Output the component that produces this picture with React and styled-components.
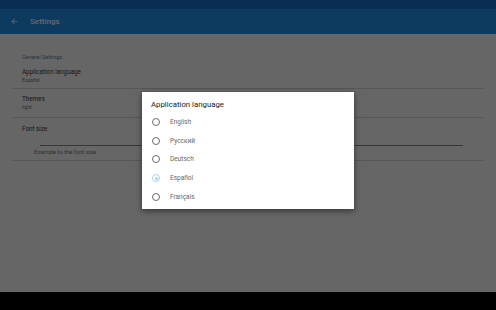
import React, { useState } from 'react'
import styled, { createGlobalStyle } from 'styled-components'

const GlobalStyle = createGlobalStyle`
  html, body {
    margin: 0;
    padding: 0;
    background: #000;
  }
  body {
    font-family: Roboto, "Noto Sans", sans-serif;
  }
`

const languages = ['English', 'Русский', 'Deutsch', 'Español', 'Français']

const Screen = styled.div`
  position: relative;
  width: 496px;
  height: 310px;
  display: flex;
  flex-direction: column;
  overflow: hidden;
`

const StatusBar = styled.div`
  height: 9px;
  background: #1a74cf;
`

const Toolbar = styled.div`
  height: 25px;
  background: #2193f0;
  display: flex;
  align-items: center;
  padding-left: 10px;
  gap: 11px;
  color: #fff;
`

const Title = styled.div`
  font-size: 8px;
  font-weight: 500;
`

const Content = styled.div`
  flex: 1;
  background: #fff;
  padding: 18px 13px 0;
`

const Section = styled.div`
  font-size: 5.5px;
  color: #5b8ab0;
  padding-left: 9px;
  height: 10px;
  line-height: 10px;
`

const Item = styled.div`
  border-bottom: 1px solid #d6d6d6;
  padding: ${p => p.$pad || '6px 0 6px 9px'};
  display: flex;
  flex-direction: column;
`

const ItemTitle = styled.div`
  font-size: 6.3px;
  line-height: 9px;
  color: #3a3a3a;
`

const ItemSub = styled.div`
  font-size: 5px;
  line-height: 7px;
  color: #777;
`

const Slider = styled.div`
  height: 1px;
  background: #8a8a8a;
  margin: 11px 20px 0 18px;
`

const Example = styled.div`
  font-size: 5.8px;
  color: #7a7a7a;
  margin: 3px 0 0 12px;
`

const NavBar = styled.div`
  height: 18px;
  background: #000;
`

const Scrim = styled.div`
  position: absolute;
  left: 0;
  top: 0;
  right: 0;
  bottom: 18px;
  background: rgba(0, 0, 0, 0.6);
`

const Dialog = styled.div`
  position: absolute;
  left: 142px;
  top: 92px;
  width: 212px;
  height: 117px;
  background: #fff;
  box-shadow: 0 2px 6px rgba(0, 0, 0, 0.5);
  box-sizing: border-box;
  padding: 8px 0 0 9px;
`

const DialogTitle = styled.div`
  font-size: 7.8px;
  color: #212121;
  line-height: 9px;
  margin-bottom: 4px;
`

const Option = styled.div`
  display: flex;
  align-items: center;
  height: 18.6px;
  gap: 10px;
  padding-left: 1px;
  cursor: pointer;
`

const Radio = styled.span`
  width: 6px;
  height: 6px;
  border-radius: 50%;
  border: 1px solid ${p => (p.$on ? '#a9d4e4' : '#6b6b6b')};
  display: flex;
  align-items: center;
  justify-content: center;
  &::after {
    content: '';
    width: 3px;
    height: 3px;
    border-radius: 50%;
    background: ${p => (p.$on ? '#a9d4e4' : 'transparent')};
  }
`

const Label = styled.span`
  font-size: 6.5px;
  color: #666;
`

const BackArrow = () => (
  <svg width="9" height="9" viewBox="0 0 24 24" fill="#fff">
    <path d="M20 11H7.83l5.59-5.59L12 4l-8 8 8 8 1.41-1.41L7.83 13H20v-2z" />
  </svg>
)

export default function App() {
  const [lang, setLang] = useState('Español')

  return (
    <Screen>
      <GlobalStyle />
      <StatusBar />
      <Toolbar>
        <BackArrow />
        <Title>Settings</Title>
      </Toolbar>
      <Content>
        <Section>General Settings</Section>
        <Item $pad="6px 0 4px 9px">
          <ItemTitle>Application language</ItemTitle>
          <ItemSub>{lang}</ItemSub>
        </Item>
        <Item $pad="6px 0 6px 9px">
          <ItemTitle>Themes</ItemTitle>
          <ItemSub>light</ItemSub>
        </Item>
        <Item $pad="7px 0 5px 9px">
          <ItemTitle>Font size</ItemTitle>
          <Slider />
          <Example>Example to the font size</Example>
        </Item>
      </Content>
      <NavBar />
      <Scrim />
      <Dialog>
        <DialogTitle>Application language</DialogTitle>
        {languages.map(l => (
          <Option key={l} onClick={() => setLang(l)}>
            <Radio $on={l === lang} />
            <Label>{l}</Label>
          </Option>
        ))}
      </Dialog>
    </Screen>
  )
}
